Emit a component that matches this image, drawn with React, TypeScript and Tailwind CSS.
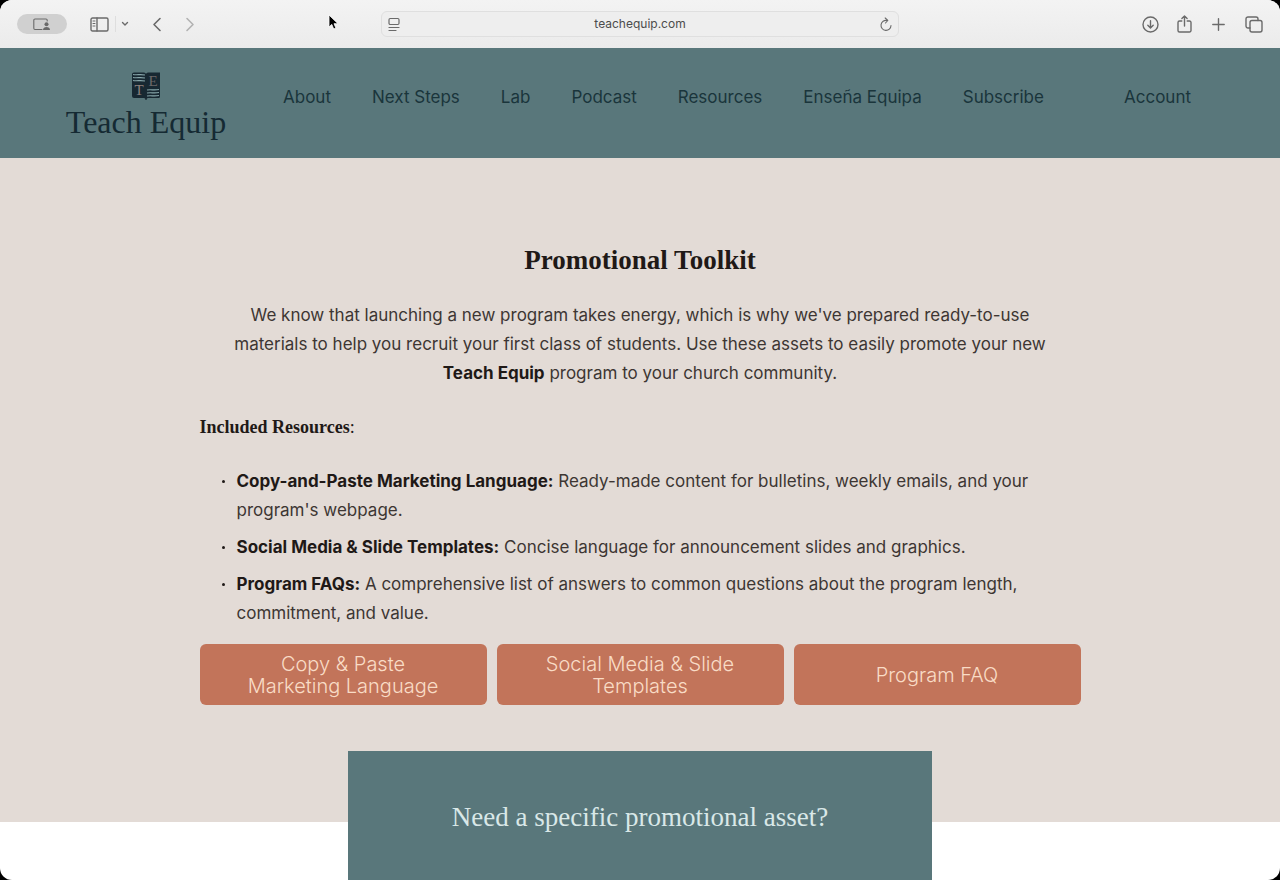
import React from 'react';

const iconProps = {
  fill: 'none',
  stroke: 'currentColor',
  strokeWidth: 1.4,
  strokeLinecap: 'round' as const,
  strokeLinejoin: 'round' as const
};

const BrowserBar: React.FC = () => {
  return <div className="flex h-12 shrink-0 items-center bg-linear-to-b from-[#f3f3f3] to-[#ebebeb] px-[17px] text-[#6a6a6a]">
      <div className="flex flex-1 items-center">
        <button aria-label="Profile" className="flex h-5 w-[50px] items-center justify-center rounded-full bg-[#d0d0d0]">
          <svg width="18" height="13" viewBox="0 0 18 13" {...iconProps} strokeWidth={1.1}>
            <path d="M9 11.500H2A1.200 1.200 0 0 1 .8 10.300V2.200A1.200 1.200 0 0 1 2 1H13A1.200 1.200 0 0 1 14.200 2.200V3" />
            <circle cx="13.500" cy="6.300" r="2" fill="currentColor" stroke="none" />
            <path d="M10 12c0-2 1.500-3 3.500-3s3.500 1 3.500 3z" fill="currentColor" stroke="none" />
          </svg>
        </button>
        <button aria-label="Show sidebar" className="ml-[23px]">
          <svg width="19" height="15" viewBox="0 0 19 15" {...iconProps}>
            <rect x="1" y="1" width="17" height="13" rx="1.500" />
            <path d="M7 1v13" />
            <path d="M3 4h2M3 6.500h2M3 9h2" strokeWidth="1" />
          </svg>
        </button>
        <div className="ml-[6px] h-4 w-px bg-[#dedede]" />
        <button aria-label="Tab groups" className="ml-[5px]">
          <svg width="8" height="6" viewBox="0 0 8 6" {...iconProps}>
            <path d="M1.500 1.500 4 4l2.500-2.500" />
          </svg>
        </button>
        <button aria-label="Back" className="ml-[23px]">
          <svg width="10" height="15" viewBox="0 0 10 15" {...iconProps} strokeWidth={1.600}>
            <path d="M8 1.500 2 7.500l6 6" />
          </svg>
        </button>
        <button aria-label="Forward" className="ml-[23px] text-[#b2b2b2]">
          <svg width="10" height="15" viewBox="0 0 10 15" {...iconProps} strokeWidth={1.600}>
            <path d="m2 1.500 6 6-6 6" />
          </svg>
        </button>
      </div>
      <div className="flex h-[26px] w-[518px] items-center rounded-md border border-[#dfdfdf] bg-[#eeeeee] px-[6px]">
        <button aria-label="Page settings">
          <svg width="12" height="15" viewBox="0 0 12 15" {...iconProps} strokeWidth={1.200}>
            <rect x="1" y="1.500" width="10" height="6" rx="1.200" />
            <path d="M1 10.500h10M1 13.500h7" />
          </svg>
        </button>
        <input aria-label="Address" defaultValue="teachequip.com" className="min-w-0 flex-1 bg-transparent text-center font-['Inter',sans-serif] text-xs text-[#4c4c4c] outline-none" />
        <button aria-label="Reload">
          <svg width="12" height="15" viewBox="0 0 12 15" {...iconProps} strokeWidth={1.100}>
            <path d="M7 3.500A5 5 0 1 0 11 8.500" />
            <path d="M5.200 1 7.800 3.500 5.500 6" />
          </svg>
        </button>
      </div>
      <div className="flex flex-1 items-center justify-end">
        <button aria-label="Downloads">
          <svg width="17" height="17" viewBox="0 0 17 17" {...iconProps}>
            <circle cx="8.500" cy="8.500" r="7.500" />
            <path d="M8.500 4.800v7M5.800 9.300l2.700 2.700 2.700-2.700" />
          </svg>
        </button>
        <button aria-label="Share" className="ml-[18px]">
          <svg width="15" height="18" viewBox="0 0 15 18" {...iconProps}>
            <path d="M4.800 6H2.500A1.500 1.500 0 0 0 1 7.500v8A1.500 1.500 0 0 0 2.500 17h10a1.500 1.500 0 0 0 1.500-1.500v-8A1.500 1.500 0 0 0 12.500 6h-2.300" />
            <path d="M7.500 11V1M4.900 3.500 7.500 1l2.600 2.500" />
          </svg>
        </button>
        <button aria-label="New tab" className="ml-5">
          <svg width="13" height="13" viewBox="0 0 13 13" {...iconProps}>
            <path d="M6.500 .8v11.400M.8 6.500h11.400" />
          </svg>
        </button>
        <button aria-label="Tab overview" className="ml-5">
          <svg width="18" height="17" viewBox="0 0 18 17" {...iconProps}>
            <rect x="5" y="4.500" width="12" height="11.500" rx="2" />
            <path d="M5 12H3a2 2 0 0 1-2-2V3a2 2 0 0 1 2-2h8a2 2 0 0 1 2 2v1.500" />
          </svg>
        </button>
      </div>
    </div>;
};

const Logo: React.FC = () => {
  return <a href="#" className="flex w-[162px] flex-col items-center font-['Liberation_Serif',serif] text-[#152a33]">
      <svg width="30" height="29" viewBox="0 0 30 29" fill="none">
        <path d="M1 2Q1 .500 3 .500h9.500q1.500 0 2.500 1.200Q16 .500 17.500.500H29V24.500q0 1.500-1.500 1.500H17q-1.500 0-1.500 2h-1q0-2-1.500-2H3q-2 0-2-2z" fill="#172832" />
        <path d="M2 2.500c4 .8 7-.500 12 .500M2 5.500c4 .8 7-.500 12 .500M2 8.500c4 .8 7-.500 12 .500M16 18c4-.8 7 .500 12-.500M16 21c4-.8 7 .500 12-.500M16 24c4-.8 7 .500 12-.500" stroke="#86a5a9" strokeWidth="1.200" />
        <text x="8" y="23" textAnchor="middle" fontSize="15" fill="#8d807e">T</text>
        <text x="22" y="14" textAnchor="middle" fontSize="15" fill="#6b6668">E</text>
      </svg>
      <span className="whitespace-nowrap text-[32px] leading-[42px]">Teach Equip</span>
    </a>;
};

const SiteHeader: React.FC = () => {
  const navItems = ['About', 'Next Steps', 'Lab', 'Podcast', 'Resources', 'Enseña Equipa', 'Subscribe'];
  return <header className="flex shrink-0 items-start bg-[#59777b] pt-6 pr-[89px] pb-[15px] pl-[65px] font-['Inter',sans-serif] text-[17px] leading-[26px] text-[#1a353b]">
      <Logo />
      <nav className="ml-14 flex flex-1 items-center gap-[41px] pt-3 whitespace-nowrap">
        {navItems.map(item => <a key={item} href="#">{item}</a>)}
        <a href="#" className="ml-auto">Account</a>
      </nav>
    </header>;
};

const Toolkit: React.FC = () => {
  const resources = [{
    title: 'Copy-and-Paste Marketing Language:',
    description: "Ready-made content for bulletins, weekly emails, and your program's webpage."
  }, {
    title: 'Social Media & Slide Templates:',
    description: 'Concise language for announcement slides and graphics.'
  }, {
    title: 'Program FAQs:',
    description: 'A comprehensive list of answers to common questions about the program length, commitment, and value.'
  }];
  const actions = ['Copy & Paste Marketing Language', 'Social Media & Slide Templates', 'Program FAQ'];
  return <section className="shrink-0 bg-[#e3dbd6] px-6 pt-20 pb-[117px] text-[#1f1917]">
      <div className="mx-auto max-w-[881px] font-['Inter',sans-serif] text-[17px] leading-[29px]">
        <h1 className="text-center font-['Liberation_Serif',serif] text-[27px] leading-[44px] font-bold">Promotional Toolkit</h1>
        <p className="mt-[19px] px-5 text-center text-[#3d3633]">
          We know that launching a new program takes energy, which is why we've prepared ready-to-use materials to help you recruit your first class of students. Use these assets to easily promote your new <strong className="text-[#1f1917]">Teach Equip</strong> program to your church community.
        </p>
        <h2 className="mt-[25px] font-['Liberation_Serif',serif] text-[18px] font-bold">Included Resources<span className="font-normal">:</span></h2>
        <ul className="mt-[25px] flex flex-col gap-2 pr-4 pl-[22px]">
          {resources.map(item => <li key={item.title} className="flex text-[#3d3633]">
              <span className="mt-[13px] mr-3 size-[3px] shrink-0 rounded-full bg-[#1f1917]" />
              <p><strong className="text-[#1f1917]">{item.title}</strong> {item.description}</p>
            </li>)}
        </ul>
        <div className="mt-4 grid grid-cols-3 gap-[10px]">
          {actions.map(label => <button key={label} className="flex h-[61px] items-center justify-center rounded-md bg-[#c2745a] px-9 text-xl leading-[22px] font-light text-[#f9dcc6]">{label}</button>)}
        </div>
      </div>
    </section>;
};

const App: React.FC = () => {
  return <div className="h-screen bg-black">
      <div className="relative flex h-full flex-col overflow-hidden rounded-xl bg-white">
        <BrowserBar />
        <SiteHeader />
        <Toolkit />
        <section className="z-10 mx-auto -mt-[71px] w-[584px] max-w-full flex-1 bg-[#59777b] pt-12">
          <h2 className="text-center font-['Liberation_Serif',serif] text-[27px] leading-9 text-[#d9e8e8]">Need a specific promotional asset?</h2>
        </section>
        <svg className="absolute top-[14px] left-[328px]" width="11" height="17" viewBox="0 0 11 17">
          <path d="M1 1v12l2.800-2.600L5.700 15l2.200-1-1.900-4.300H10z" fill="#000" stroke="#fff" strokeWidth=".8" />
        </svg>
      </div>
    </div>;
};

export default App;
